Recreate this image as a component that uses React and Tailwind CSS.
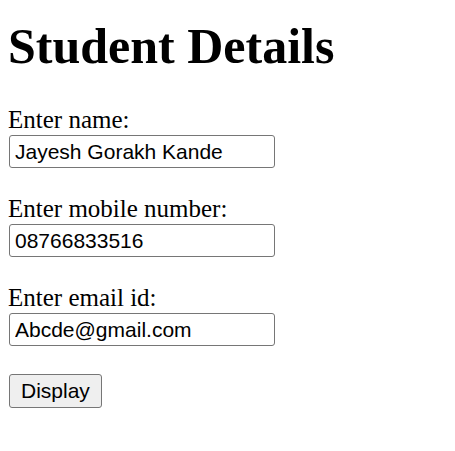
import React, { useState } from "react";

const fields = [
	{ label: "Enter name:", value: "Jayesh Gorakh Kande" },
	{ label: "Enter mobile number:", value: "08766833516" },
	{ label: "Enter email id:", value: "Abcde@gmail.com" },
];

const App = () => {
	const [values, setValues] = useState(fields.map((f) => f.value));

	const handleChange = (i, v) => {
		setValues((prev) => prev.map((x, j) => (j === i ? v : x)));
	};

	return (
		<div className="min-h-[451px] bg-white pl-2 pt-[18px] font-['Liberation_Serif',serif] text-black">
			<h1 className="mb-[32px] text-[50px] font-bold leading-[56px]">
				Student Details
			</h1>

			{fields.map((f, i) => (
				<div key={f.label} className="mb-[27px]">
					<div className="text-[25px] leading-[28px]">{f.label}</div>
					<input
						type="text"
						value={values[i]}
						onChange={(e) => handleChange(i, e.target.value)}
						className="ml-px mt-px block h-[33px] w-[266px] rounded-[3px] border border-[#767676] bg-white px-[5px] font-['Liberation_Sans',Arial,sans-serif] text-[21px] text-black outline-none"
					/>
				</div>
			))}

			{/* Display button */}
			<button className="ml-px mt-px h-[34px] rounded-[3px] border border-[#767676] bg-[#efefef] px-[11px] font-['Liberation_Sans',Arial,sans-serif] text-[21px] text-black">
				Display
			</button>
		</div>
	);
};

export default App;
